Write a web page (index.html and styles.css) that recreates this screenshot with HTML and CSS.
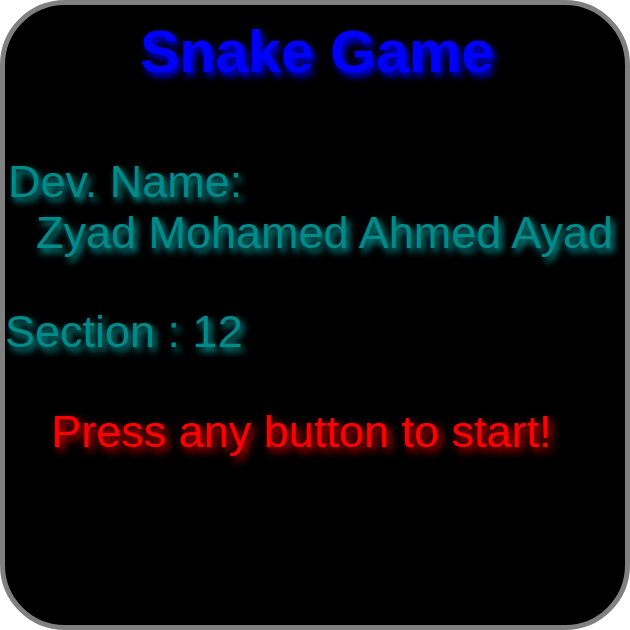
FILE: index.html
```html
<!DOCTYPE html>
<html>
<head>
<meta charset="utf-8">
<link rel="stylesheet" href="styles.css">
</head>
<body>
<div class="screen">
  <h1 class="title">Snake Game</h1>
  <div class="info dev">
    <div class="dev-label">Dev. Name:</div>
    <div class="dev-name">Zyad Mohamed Ahmed Ayad</div>
  </div>
  <div class="info section">Section : 12</div>
  <div class="prompt">Press any button to start!</div>
</div>
</body>
</html>
```
FILE: styles.css
```css
html, body {
  margin: 0;
  padding: 0;
  background: #fff;
}
.screen {
  width: 630px;
  height: 630px;
  box-sizing: border-box;
  border: 5px solid #808080;
  border-radius: 65px;
  background: #000;
  padding-top: 17px;
  font-family: "Liberation Sans", Arial, sans-serif;
  overflow: hidden;
}
.title {
  margin: 0;
  padding-left: 4px;
  font-size: 59px;
  line-height: 60px;
  font-weight: bold;
  text-align: center;
  color: #0000ff;
  text-shadow: 3px 4px 7px #0000ff;
}
.info {
  font-size: 45px;
  line-height: 51px;
  color: #008b8b;
  text-shadow: 3px 4px 7px #00b0b0;
  white-space: nowrap;
}
.dev {
  margin-top: 74px;
}
.dev-label {
  padding-left: 3px;
}
.dev-name {
  padding-left: 31px;
}
.section {
  margin-top: 48px;
}
.prompt {
  margin-top: 49px;
  padding-left: 46px;
  font-size: 45px;
  line-height: 51px;
  color: #ff0000;
  text-shadow: 4px 4px 8px #ff0000;
  white-space: nowrap;
}
```
